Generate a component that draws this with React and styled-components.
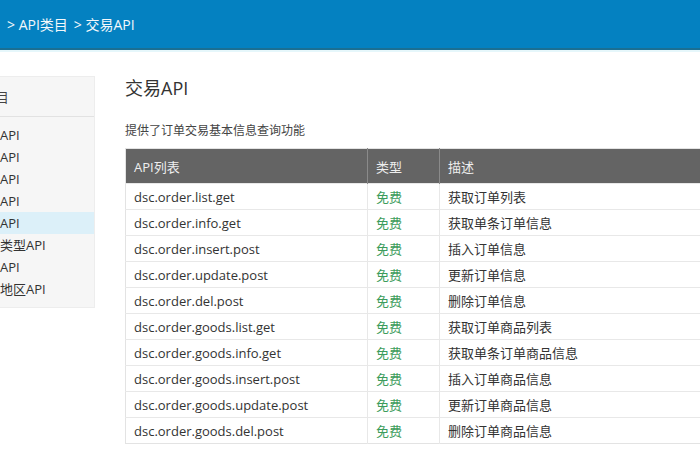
import React from 'react';
import styled, { createGlobalStyle } from 'styled-components';

const GlobalStyle = createGlobalStyle`
  html, body {
    margin: 0;
    padding: 0;
    overflow: hidden;
    background: #fff;
  }
  body {
    font-family: "Open Sans", "Noto Sans CJK SC", sans-serif;
    color: #333;
  }
`;

const TopBar = styled.div`
  height: 48px;
  background: #0481c1;
  border-bottom: 2px solid #1b6f93;
  box-shadow: 0 2px 0 #e6f7fb;
  display: flex;
  align-items: center;
  padding-left: 7px;
  color: #f4f8fb;
  font-size: 14px;
`;

const Crumb = styled.span`
  margin-right: 6px;
`;

const Body = styled.div`
  display: flex;
  padding-top: 26px;
`;

const Sidebar = styled.div`
  width: 133px;
  margin-left: -40px;
  flex-shrink: 0;
  align-self: flex-start;
  background: #f6f6f6;
  border: 1px solid #ededed;
`;

const SideTitle = styled.div`
  height: 39px;
  line-height: 40px;
  padding-left: 2px;
  font-size: 13px;
  color: #444;
  border-bottom: 1px solid #e2e2e2;
`;

const SideList = styled.div`
  padding: 7px 0;
`;

const SideItem = styled.div`
  height: 22px;
  line-height: 22px;
  padding-left: 13px;
  font-size: 13px;
  color: #333;
  background: ${(p) => (p.$active ? '#dcf0f9' : 'transparent')};
`;

const Main = styled.div`
  margin-left: 30px;
  padding-top: 1px;
  flex: 1;
  min-width: 0;
`;

const Title = styled.h1`
  margin: 0;
  font-size: 18px;
  line-height: 22px;
  font-weight: normal;
  color: #333;
`;

const Intro = styled.p`
  margin: 23px 0 8px;
  font-size: 12px;
  line-height: 18px;
  color: #444;
`;

const Table = styled.table`
  width: 720px;
  border-collapse: collapse;
  border: 1px solid #e3e3e3;
  font-size: 13px;
`;

const HeadCell = styled.th`
  height: 34px;
  padding: 0 8px;
  text-align: left;
  font-weight: normal;
  color: #eee;
  background: #646464;
  border-left: 1px solid #8a8a8a;
  width: ${(p) => p.$w || 'auto'};
  &:first-child {
    border-left: none;
  }
`;

const Cell = styled.td`
  height: 25px;
  padding: 0 8px;
  border-top: 1px solid #e8e8e8;
  border-left: 1px solid #e8e8e8;
  color: ${(p) => (p.$free ? '#3c9c5c' : '#333')};
  &:first-child {
    border-left: none;
  }
`;

const sideItems = ['基础API', '商品API', '会员API', '店铺API', '交易API', '商品类型API', '物流API', '行政地区API'];

const rows = [
  ['dsc.order.list.get', '获取订单列表'],
  ['dsc.order.info.get', '获取单条订单信息'],
  ['dsc.order.insert.post', '插入订单信息'],
  ['dsc.order.update.post', '更新订单信息'],
  ['dsc.order.del.post', '删除订单信息'],
  ['dsc.order.goods.list.get', '获取订单商品列表'],
  ['dsc.order.goods.info.get', '获取单条订单商品信息'],
  ['dsc.order.goods.insert.post', '插入订单商品信息'],
  ['dsc.order.goods.update.post', '更新订单商品信息'],
  ['dsc.order.goods.del.post', '删除订单商品信息'],
];

const App = () => {
  return (
    <>
      <GlobalStyle />
      <TopBar>
        <Crumb>&gt; API类目</Crumb>
        <Crumb>&gt; 交易API</Crumb>
      </TopBar>
      <Body>
        <Sidebar>
          <SideTitle>API类目</SideTitle>
          <SideList>
            {sideItems.map((s) => (
              <SideItem key={s} $active={s === '交易API'}>{s}</SideItem>
            ))}
          </SideList>
        </Sidebar>
        <Main>
          <Title>交易API</Title>
          <Intro>提供了订单交易基本信息查询功能</Intro>
          <Table>
            <thead>
              <tr>
                <HeadCell $w="225px">API列表</HeadCell>
                <HeadCell $w="55px">类型</HeadCell>
                <HeadCell>描述</HeadCell>
              </tr>
            </thead>
            <tbody>
              {rows.map(([api, desc]) => (
                <tr key={api}>
                  <Cell>{api}</Cell>
                  <Cell $free>免费</Cell>
                  <Cell>{desc}</Cell>
                </tr>
              ))}
            </tbody>
          </Table>
        </Main>
      </Body>
    </>
  );
};

export default App;
